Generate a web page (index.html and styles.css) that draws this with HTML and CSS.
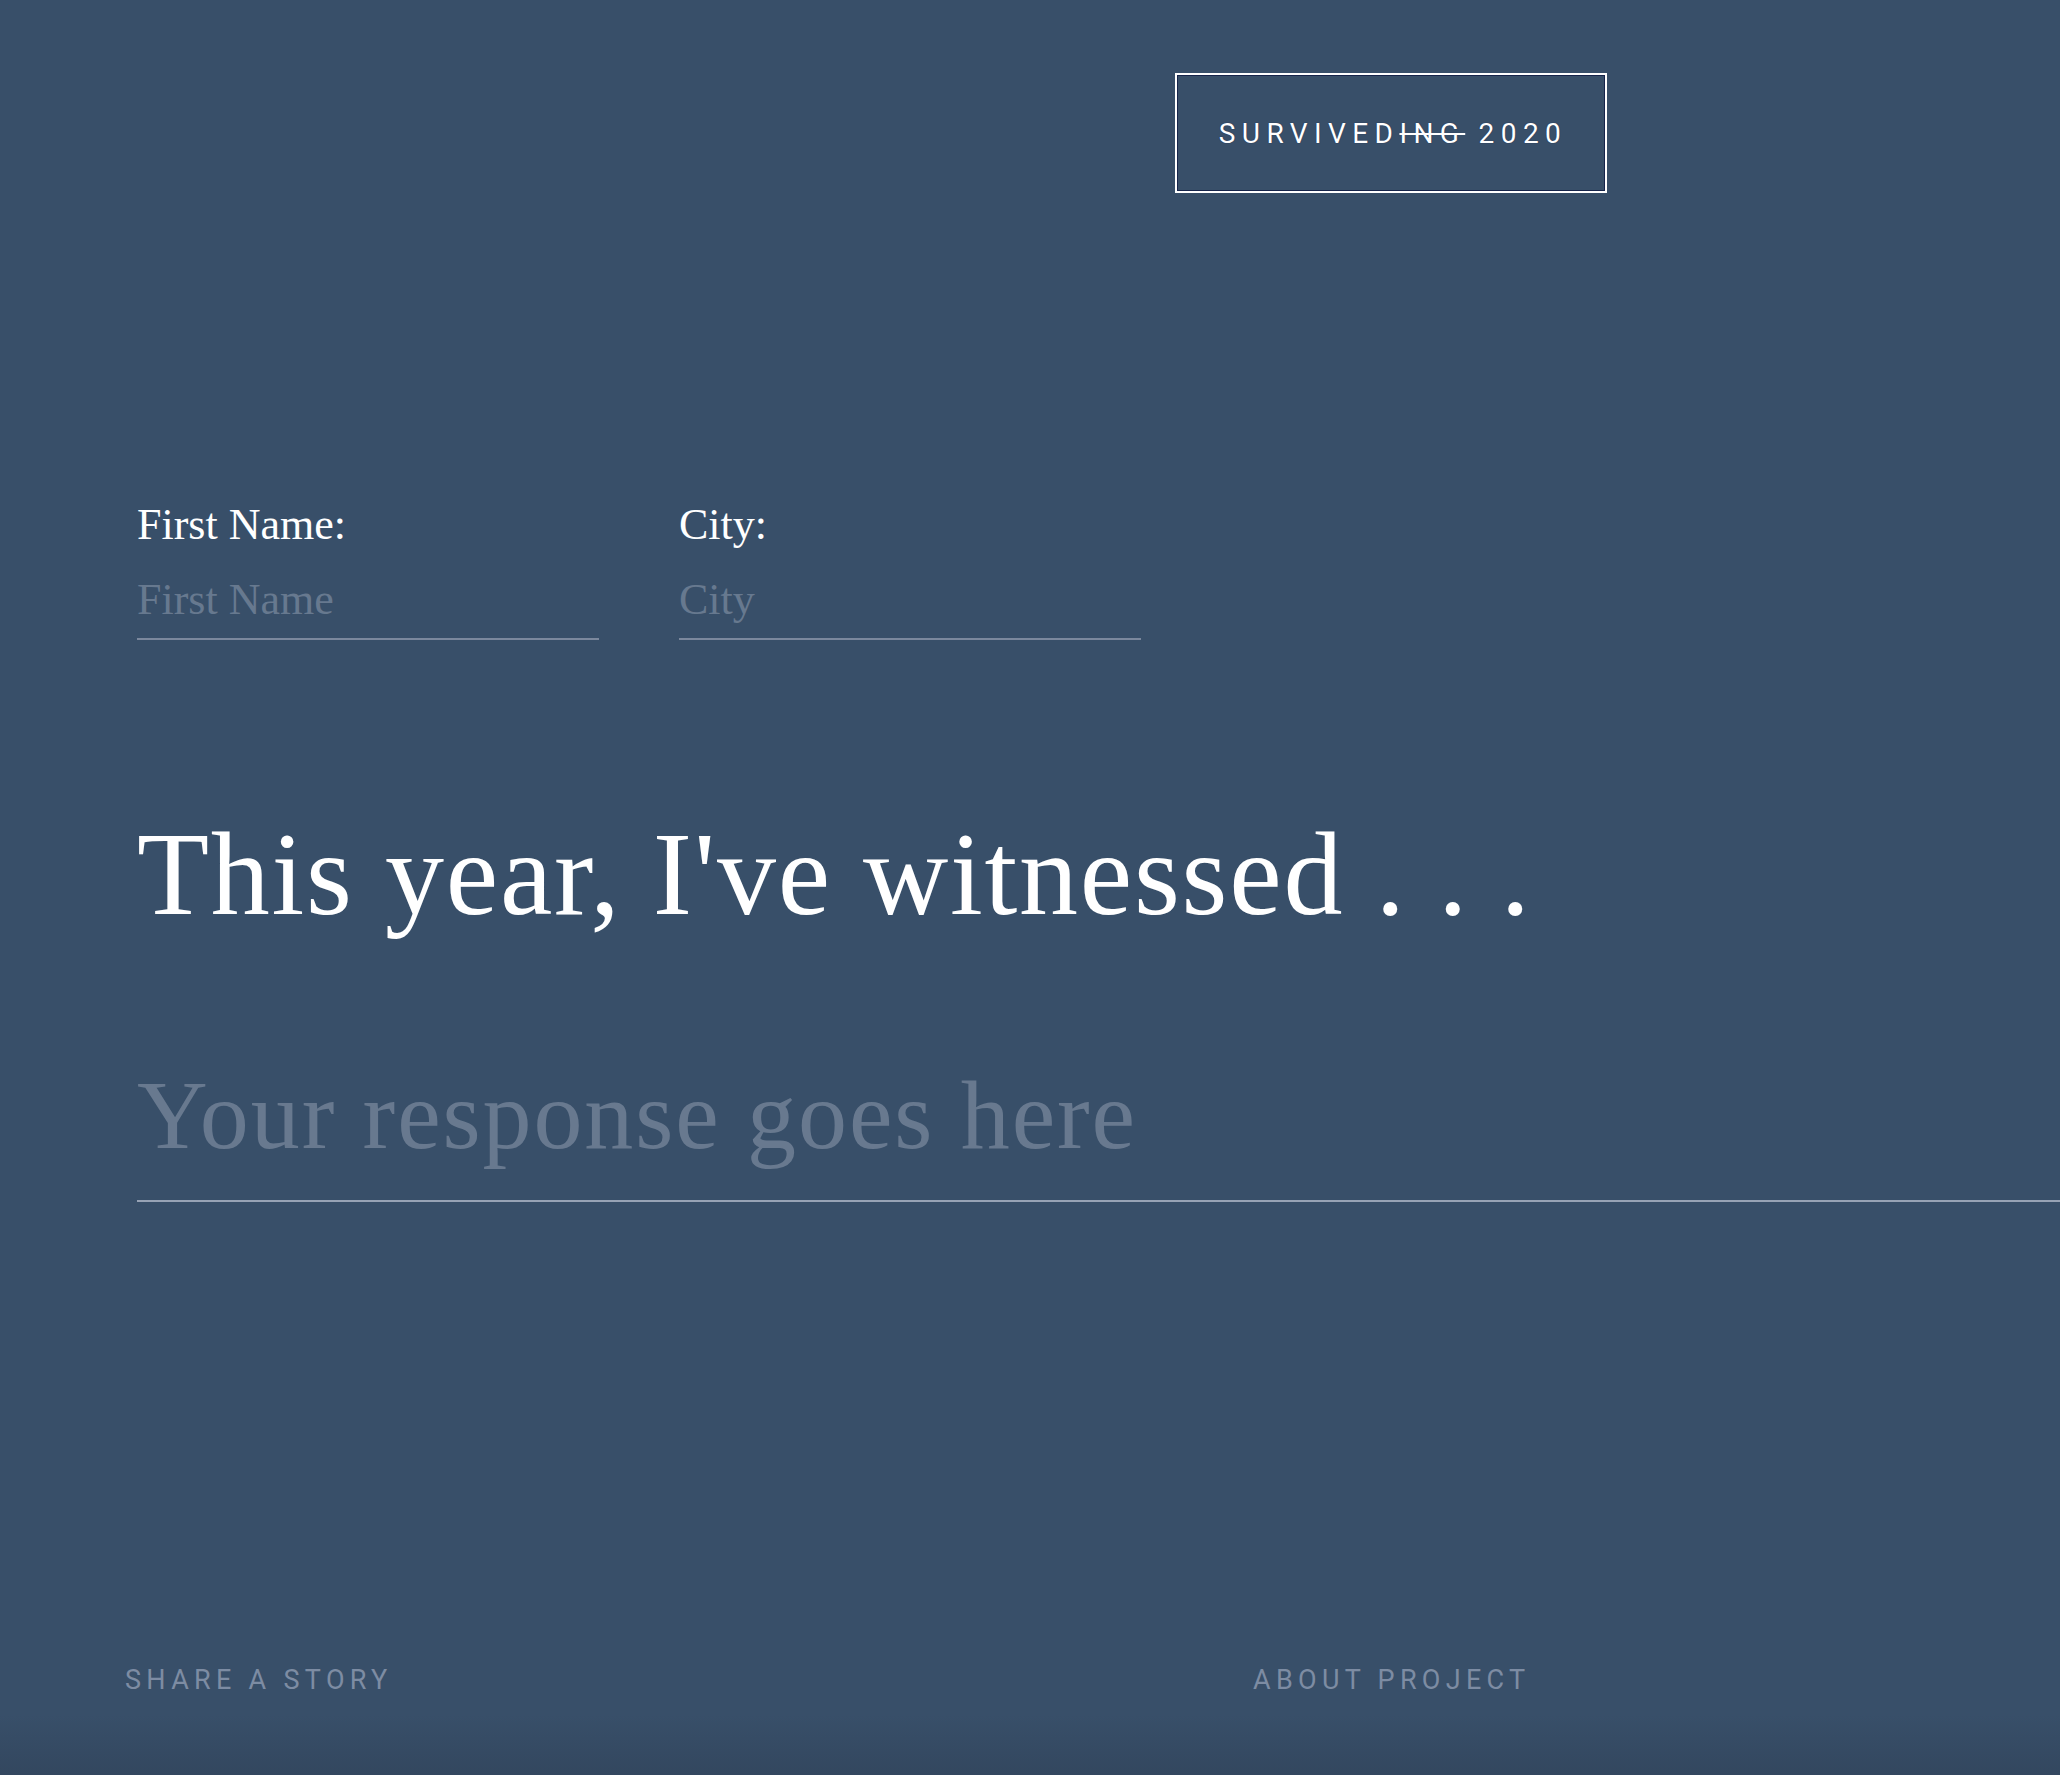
FILE: index.html
```html
<!DOCTYPE html>
<html lang="en">
<head>
<meta charset="utf-8">
<title>Surviving 2020</title>
<link rel="stylesheet" href="styles.css">
</head>
<body>
<div class="page">
  <header class="header">
    <div class="badge"><span class="badge-text">SURVIVED<span class="strike">ING</span> 2020</span></div>
  </header>

  <main class="main">
    <div class="fields">
      <label class="field">
        <span class="field-label">First Name:</span>
        <input class="field-input" type="text" placeholder="First Name">
      </label>
      <label class="field">
        <span class="field-label">City:</span>
        <input class="field-input" type="text" placeholder="City">
      </label>
    </div>

    <h1 class="prompt">This year, I've witnessed . . .</h1>

    <input class="response" type="text" placeholder="Your response goes here">
  </main>

  <footer class="footer">
    <a class="footer-link" href="#">SHARE A STORY</a>
    <a class="footer-link" href="#">ABOUT PROJECT</a>
  </footer>
</div>
</body>
</html>
```

FILE: styles.css
```css
html, body {
  margin: 0;
  padding: 0;
}

body {
  background: #384f69;
  color: #ffffff;
  font-family: "Liberation Serif", "Times New Roman", serif;
  overflow: hidden;
}

.page {
  display: flex;
  flex-direction: column;
  height: 1775px;
  background: linear-gradient(to bottom, #384f69 0, #384f69 1715px, #33475f 1775px);
}

.header {
  padding-top: 73px;
  padding-left: 1175px;
}

.badge {
  box-sizing: border-box;
  width: 432px;
  height: 120px;
  border: 2px solid #ffffff;
  box-shadow: inset 0 0 0 1px #16244a;
  display: flex;
  align-items: center;
  justify-content: center;
  padding-left: 4px;
  font-family: Roboto, "Liberation Sans", sans-serif;
  font-size: 28px;
  letter-spacing: 6.4px;
  color: #ffffff;
  text-shadow: 0 0 1px #16244a;
}

.badge-text {
  white-space: pre;
}

.strike {
  text-decoration: line-through;
  text-decoration-thickness: 2px;
}

.main {
  padding-left: 137px;
}

.fields {
  display: flex;
  gap: 80px;
  margin-top: 310px;
}

.field {
  display: flex;
  flex-direction: column;
  width: 462px;
}

.field-label {
  font-size: 44px;
  line-height: 44px;
  margin-bottom: 30px;
  color: #ffffff;
}

.field-input {
  box-sizing: content-box;
  height: 44px;
  line-height: 44px;
  padding: 0 0 17px 0;
  margin: 0;
  border: none;
  border-bottom: 2px solid #7b889d;
  background: transparent;
  font-family: "Liberation Serif", "Times New Roman", serif;
  font-size: 44px;
  color: #ffffff;
  outline: none;
}

.field-input::placeholder {
  color: #67798f;
}

.prompt {
  margin: 176px 0 0 0;
  font-weight: normal;
  font-size: 118px;
  line-height: 118px;
  letter-spacing: 1.75px;
  color: #ffffff;
}

.response {
  display: block;
  box-sizing: content-box;
  width: 100%;
  height: 98px;
  line-height: 98px;
  margin: 132px 0 0 0;
  padding: 0 0 36px 0;
  border: none;
  border-bottom: 2px solid #97a3b5;
  background: transparent;
  font-family: "Liberation Serif", "Times New Roman", serif;
  font-size: 98px;
  letter-spacing: 1.9px;
  color: #ffffff;
  outline: none;
}

.response::placeholder {
  color: #68798f;
}

.footer {
  display: grid;
  grid-template-columns: 1128px auto;
  margin-top: 465px;
  padding-left: 125px;
}

.footer-link {
  font-family: Roboto, "Liberation Sans", sans-serif;
  font-size: 27px;
  line-height: 27px;
  letter-spacing: 5.3px;
  color: #7d8ca3;
  text-decoration: none;
}
```
